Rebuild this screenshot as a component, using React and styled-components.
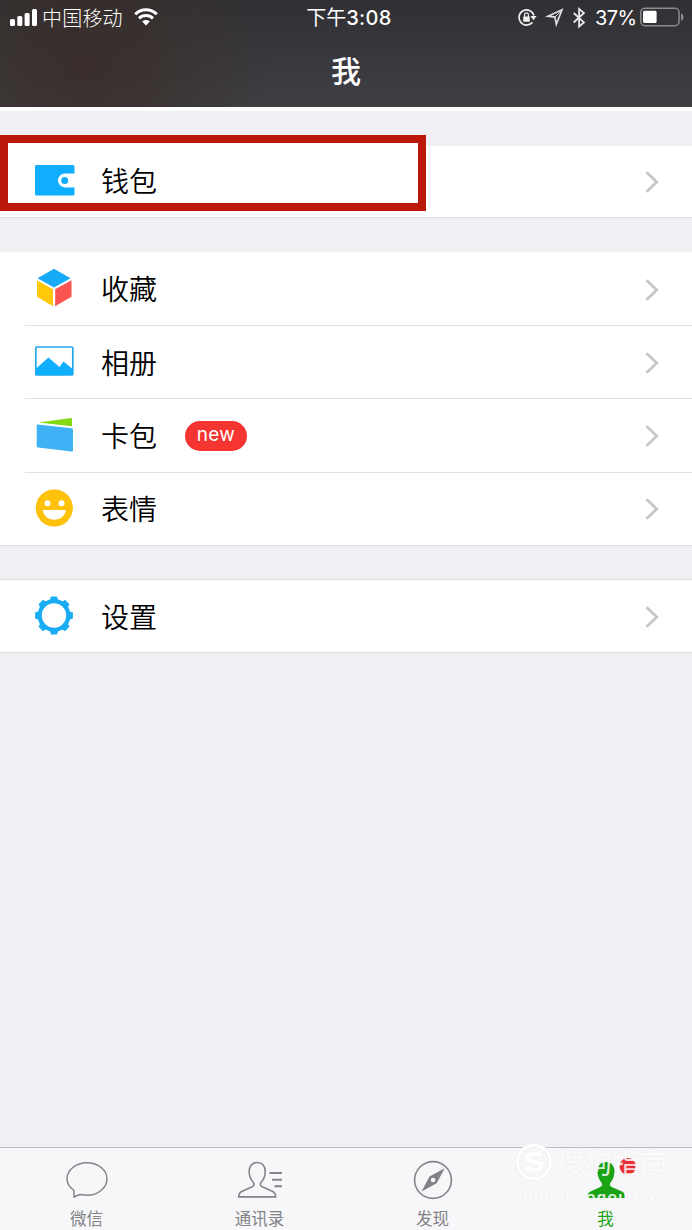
import styled, { createGlobalStyle } from 'styled-components';

const GlobalStyle = createGlobalStyle`
  * {
    box-sizing: border-box;
  }

  body {
    margin: 0;
    background-color: #efeff4;
    font-family: 'Liberation Sans', 'Noto Sans CJK SC', sans-serif;
  }

  svg {
    display: block;
    flex-shrink: 0;
    overflow: visible;
  }
`;

const Page = styled.div`
  display: flex;
  flex-direction: column;
  width: 692px;
  height: 1230px;
  overflow: hidden;
  background-color: #efeff4;
`;

const Header = styled.header`
  height: 111px;
  flex-shrink: 0;
  border-bottom: 4px solid #ffffff;
  color: #ffffff;
  background: radial-gradient(
      ellipse 190px 230px at 85px 66px,
      rgba(57, 42, 39, 0.75),
      rgba(58, 50, 45, 0.5) 60%,
      transparent
    ),
    linear-gradient(#302f34, #403f44);

  h1 {
    margin: 0;
    height: 68px;
    line-height: 68px;
    font-family: 'Noto Sans CJK SC', sans-serif;
    font-size: 30px;
    font-weight: 500;
    text-align: center;
  }
`;

const StatusBar = styled.div`
  display: grid;
  grid-template-columns: 250px 198px 244px;
  height: 35px;
  align-items: center;
`;

const StatusGroup = styled.div`
  display: flex;
  align-items: center;
  justify-content: ${({ $align }) => $align || 'flex-start'};
  height: 35px;
  padding: ${({ $padding }) => $padding || '0'};
  font-family: ${({ $latin }) =>
    $latin
      ? "Inter, 'Noto Sans CJK SC', sans-serif"
      : "'Noto Sans CJK SC', sans-serif"};
  font-size: 20px;
  font-weight: 300;
  line-height: 35px;
  white-space: nowrap;
`;

const Clock = styled.span`
  padding-top: 2px;
  font-weight: 400;

  b {
    font-weight: 500;
    letter-spacing: 0.4px;
  }
`;

const Carrier = styled.span`
  margin: 0 11.5px 0 5px;
  letter-spacing: 0.2px;
`;

const Percent = styled.span`
  width: 39px;
  margin: 0 6px 0 10px;
  padding-top: 1px;
  font-weight: 400;
  letter-spacing: -0.6px;
`;

const Content = styled.main`
  flex: 1;
  padding-top: 35px;
`;

const Group = styled.section`
  position: relative;
  margin-bottom: ${({ $gap }) => $gap}px;
  background-color: #ffffff;
  border-bottom: 1px solid #dedee2;
  border-top: ${({ $line }) => ($line ? '1px solid #dedee2' : 'none')};
`;

const Highlight = styled.div`
  position: absolute;
  left: 0;
  top: -11px;
  width: 426px;
  height: 76px;
  border: 8px solid #bb170b;
  background-color: #ffffff;
`;

const Row = styled.div`
  position: relative;
  display: flex;
  align-items: center;
  height: ${({ $height }) => $height}px;
  padding: ${({ $shift }) => $shift}px 32px 0 34px;
`;

const Divider = styled.div`
  height: 1px;
  margin: 0 0 -1px 25px;
  background-color: #e2e2e5;
`;

const IconBox = styled.div`
  display: flex;
  width: 40px;
  height: 40px;
  margin: 0 27px 3px 0;
`;

const Label = styled.span`
  height: 44px;
  margin-bottom: 2.4px;
  line-height: 44px;
  font-family: 'Noto Sans CJK SC', sans-serif;
  font-size: 28px;
  font-weight: 350;
  color: #000000;
`;

const NewBadge = styled.span`
  width: 62px;
  height: 30px;
  margin: 0 0 1px 28px;
  border-radius: 15px;
  background-color: #f43531;
  color: #ffffff;
  font-family: Inter, sans-serif;
  font-size: 19px;
  line-height: 27px;
  letter-spacing: 0.3px;
  text-align: center;
`;

const Arrow = styled.svg`
  margin-left: auto;
`;

const TabBar = styled.nav`
  position: relative;
  display: grid;
  grid-template-columns: repeat(4, 1fr);
  height: 83px;
  flex-shrink: 0;
  border-top: 1px solid #bdbdc1;
  background-color: #f7f7f9;
`;

const Tab = styled.div`
  display: flex;
  flex-direction: column;
  align-items: center;
  padding-top: 9px;
  color: ${({ $active }) => ($active ? '#1aa315' : '#828286')};
  font-family: 'Noto Sans CJK SC', sans-serif;
  font-size: 16.5px;
  line-height: 24px;

  svg {
    margin-bottom: 5px;
  }
`;

const Watermark = styled.div`
  position: absolute;
  left: 514px;
  top: -7px;
  width: 160px;
  color: rgba(255, 255, 255, 0.85);
  text-shadow: 0 0 2px rgba(0, 0, 0, 0.06);
`;

const WatermarkBrand = styled.div`
  display: flex;
  align-items: center;
  gap: 3px;
  height: 42px;
  font-family: 'Noto Sans CJK SC', sans-serif;
  font-size: 28px;
  font-weight: 400;
  line-height: 42px;
  white-space: nowrap;
`;

const WatermarkUrl = styled.div`
  height: 26px;
  font-size: 15.5px;
  font-weight: 700;
  line-height: 27px;
  letter-spacing: 1.25px;
  white-space: nowrap;
`;

const SignalIcon = () => (
  <svg width="27" height="18" viewBox="0 0 27 18" fill="#fff">
    <rect x="0" y="10" width="5" height="7" rx="1.5" />
    <rect x="7.3" y="7" width="5" height="10" rx="1.5" />
    <rect x="14.6" y="4" width="5" height="13" rx="1.5" />
    <rect x="22" y="0" width="5" height="17" rx="1.5" />
  </svg>
);

const WifiIcon = () => (
  <svg width="24" height="18" viewBox="0 0 24 18">
    <g fill="none" stroke="#fff" strokeWidth="3">
      <path d="M1.2 5.3C7.5-.9 16.5-.9 22.8 5.3" />
      <path d="M5 9.4c4-3.8 10-3.8 14 0" />
    </g>
    <path d="M8.2 12.4c2.2-2 5.4-2 7.6 0L12 16.5z" fill="#fff" />
  </svg>
);

const RotationLockIcon = () => (
  <svg width="19" height="18" viewBox="0 0 19 18">
    <path
      d="M14.4 13.4A7.6 7.6 0 1 1 15.9 6.4"
      fill="none"
      stroke="#eee"
      strokeWidth="1.7"
    />
    <path d="M12.4 7h6.2l-3.1 4.2z" fill="#eee" />
    <rect x="5.2" y="7.4" width="6.6" height="5.4" rx=".5" fill="#eee" />
    <path d="M6.6 8V5.8a1.9 1.9 0 0 1 3.8 0V8" fill="none" stroke="#eee" strokeWidth="1.2" />
  </svg>
);

const LocationIcon = () => (
  <svg width="16" height="17" viewBox="0 0 16 17">
    <path
      d="M15 .8L1 7.2l6.9.9 1.4 7.2z"
      fill="none"
      stroke="#dcdcde"
      strokeWidth="1.7"
    />
    <path d="M15 .8L7.9 8.1" stroke="#dcdcde" strokeWidth="1" />
  </svg>
);

const BluetoothIcon = () => (
  <svg width="12" height="20" viewBox="0 0 12 20">
    <path
      d="M.7 5l10.2 9.4-4.8 4.1V.9l4.8 4.1L.7 14.5"
      fill="none"
      stroke="#e8e8ea"
      strokeWidth="1.8"
    />
  </svg>
);

const BatteryIcon = () => (
  <svg width="44" height="19" viewBox="0 0 44 19">
    <rect x=".8" y=".3" width="38.2" height="17.4" rx="4" fill="none" stroke="#8d8c91" strokeWidth="1.5" />
    <rect x="3" y="2.7" width="13.6" height="12.4" rx="1.5" fill="#fff" />
    <path d="M41 5.5c3.4 1.2 3.4 6.2 0 7.3z" fill="#8d8c91" />
  </svg>
);

const WalletIcon = () => (
  <svg width="40" height="40" viewBox="0 0 40 40">
    <path
      d="M2.5 5H39a1.5 1.5 0 0 1 1.5 1.5V13.4H31a7 7 0 0 0 0 14h9.5V34a1.5 1.5 0 0 1-1.5 1.5H2.5A1.5 1.5 0 0 1 1 34V6.5A1.5 1.5 0 0 1 2.5 5z"
      fill="#10aeff"
    />
    <circle cx="30.7" cy="20.4" r="3.5" fill="#10aeff" />
  </svg>
);

const CubeIcon = () => (
  <svg width="40" height="40" viewBox="0 0 40 40">
    <path d="M20 .8l16.5 9.5L20 19.6 3.5 10.3z" fill="#16aaf7" />
    <path d="M3 12.2l16 9v17L3 28.7z" fill="#ffc90a" />
    <path d="M37.5 12.2l-16.3 9v17l16.3-9.5z" fill="#fa5451" />
  </svg>
);

const AlbumIcon = () => (
  <svg width="40" height="40" viewBox="0 0 40 40">
    <rect x="1.8" y="6" width="37" height="28" rx="1" fill="none" stroke="#22a8e8" strokeWidth="1.7" />
    <path d="M2 27.5l12.5-11 11 9.5 4-5.5 9 7.5v6H2z" fill="#10aeff" />
  </svg>
);

const CardsIcon = () => (
  <svg width="40" height="40" viewBox="0 0 40 40">
    <path d="M4.5 7.6L36.8 3Q38 3 38 4v7.3z" fill="#85d912" />
    <path
      d="M3.8 9.5l33.7 3.8Q39 13.5 39 15v20.3q0 1.5-1.5 1.3L4 32.6q-1.3-.2-1.3-1.6V10.5q0-1 1.1-1z"
      fill="#3eb2f4"
    />
  </svg>
);

const SmileIcon = () => (
  <svg width="40" height="40" viewBox="0 0 40 40">
    <circle cx="20.3" cy="20" r="18.6" fill="#ffc20b" />
    <circle cx="13.5" cy="15.2" r="3" fill="#fff" />
    <circle cx="27.5" cy="15.2" r="3" fill="#fff" />
    <path d="M8.7 22h23.2c-.8 6-5.4 9.7-11.6 9.7S9.500 28 8.700 22z" fill="#fff" />
  </svg>
);

const GearIcon = () => (
  <svg width="40" height="40" viewBox="0 0 40 40">
    <circle cx="20" cy="19.5" r="14.3" fill="none" stroke="#1aadf3" strokeWidth="4.2" />
    {[0, 45, 90, 135, 180, 225, 270, 315].map((angle) => (
      <path
        key={angle}
        d="M15 5l1.5-2.400v-1q0-1 1-1h5q1 0 1 1v1L25 5z"
        fill="#1aadf3"
        transform={`rotate(${angle} 20 19.5)`}
      />
    ))}
  </svg>
);

const ChevronIcon = () => (
  <Arrow width="15" height="22" viewBox="0 0 15 22">
    <path d="M1.5 1.2L11.8 11 1.5 20.8" fill="none" stroke="#c7c7cb" strokeWidth="2.8" />
  </Arrow>
);

const ChatIcon = () => (
  <svg width="46" height="44" viewBox="0 0 46 44" fill="none" stroke="#858589" strokeWidth="1.5">
    <path d="M10 33.5C5.5 30.3 3 26 3 21.7 3 13 12 5.8 23 5.8S43 13 43 21.7 34.5 38.3 23 38.3c-2.800 0-5.300-.8-7.500-.8L10 40z" />
  </svg>
);

const ContactsIcon = () => (
  <svg width="46" height="44" viewBox="0 0 46 44" fill="none" stroke="#858589" strokeWidth="1.6">
    <path d="M20.2 5.5c-5 0-8.200 3.600-8 9.500.1 4.500 1.600 7.600 4 10.200 1.400 1.600 1.200 3.600-1 4.600l-10 4.400C2.700 35.400 1.700 36.500 1.700 39.900h37c0-3.400-1-4.500-3.500-5.700l-10-4.400c-2.200-1-2.400-3-1-4.600 2.400-2.600 3.900-5.700 4-10.200.2-5.900-3-9.500-8-9.500z" />
    <path d="M32.5 16H45M35 22.700h10M37.500 29.300H45" strokeWidth="2" />
  </svg>
);

const CompassIcon = () => (
  <svg width="46" height="44" viewBox="0 0 46 44">
    <circle cx="23" cy="23" r="18.4" fill="none" stroke="#858589" strokeWidth="1.6" />
    <path
      d="M34.7 11.300l-8 14.900-15.200 8.300 8-14.900zM23.100 20.700a2.300 2.300 0 1 0 0 4.600 2.300 2.300 0 0 0 0-4.600z"
      fill="#828286"
      fillRule="evenodd"
    />
  </svg>
);

const MeIcon = () => (
  <svg width="46" height="44" viewBox="0 0 46 44">
    <path
      d="M23 5c-5.400 0-8.700 3.900-8.500 10 .1 4.500 1.800 8 4 10.800 1.200 1.600.8 3.100-1.200 4.100L8 34.200C5.500 35.400 4.500 37 4.500 41H42c0-4-1-5.600-3.500-6.800l-9.800-4.300c-2-1-2.400-2.500-1.200-4.100 2.200-2.800 3.900-6.300 4-10.800.2-6.100-3.100-10-8.500-10z"
      fill="#1aa315"
    />
    <circle cx="44.7" cy="9.3" r="8.3" fill="#ed3337" />
  </svg>
);

const SogouIcon = () => (
  <svg width="39" height="38" viewBox="0 0 39 38" fill="none">
    <circle cx="20" cy="19" r="16.500" stroke="#f1f1f4" strokeWidth="4.500" />
    <circle cx="20" cy="19" r="16.500" stroke="#fff" strokeWidth="2.800" />
    <path
      d="M27.500 12.500c-4-2.300-14-2.800-14 1.900 0 5.400 14 3.400 14 8.600 0 5-11 4.300-15.500 1.700"
      stroke="#fff"
      strokeWidth="3.600"
    />
  </svg>
);

const groups = [
  {
    line: false,
    gap: 34,
    height: 71,
    shift: 0,
    highlight: true,
    rows: [{ label: '钱包', Icon: WalletIcon }],
  },
  {
    line: false,
    gap: 33,
    height: 73,
    shift: 2,
    rows: [
      { label: '收藏', Icon: CubeIcon },
      { label: '相册', Icon: AlbumIcon },
      { label: '卡包', Icon: CardsIcon, badge: 'new' },
      { label: '表情', Icon: SmileIcon },
    ],
  },
  {
    line: true,
    gap: 0,
    height: 72,
    shift: 2,
    rows: [{ label: '设置', Icon: GearIcon }],
  },
];

const tabs = [
  { label: '微信', Icon: ChatIcon },
  { label: '通讯录', Icon: ContactsIcon },
  { label: '发现', Icon: CompassIcon },
  { label: '我', Icon: MeIcon, active: true },
];

function MenuRow({ item, height, shift }) {
  const { Icon, label, badge } = item;

  return (
    <Row $height={height} $shift={shift}>
      <IconBox>
        <Icon />
      </IconBox>
      <Label>{label}</Label>
      {badge && <NewBadge>{badge}</NewBadge>}
      <ChevronIcon />
    </Row>
  );
}

function App() {
  return (
    <Page>
      <GlobalStyle />
      <Header>
        <StatusBar>
          <StatusGroup $padding="0 0 0 10px">
            <SignalIcon />
            <Carrier>中国移动</Carrier>
            <WifiIcon />
          </StatusGroup>
          <StatusGroup $align="center" $latin>
            <Clock>
              下午<b>3:08</b>
            </Clock>
          </StatusGroup>
          <StatusGroup $align="flex-end" $latin $padding="0 8px 0 0">
            <RotationLockIcon />
            <StatusGroup $padding="0 10px 0 10px">
              <LocationIcon />
            </StatusGroup>
            <BluetoothIcon />
            <Percent>37%</Percent>
            <BatteryIcon />
          </StatusGroup>
        </StatusBar>
        <h1>我</h1>
      </Header>

      <Content>
        {groups.map((group, index) => (
          <Group key={index} $line={group.line} $gap={group.gap}>
            {group.highlight && <Highlight />}
            {group.rows.map((item, i) => (
              <div key={item.label}>
                {i > 0 && <Divider />}
                <MenuRow
                  item={item}
                  height={i > 0 ? 73.4 : group.height}
                  shift={group.shift}
                />
              </div>
            ))}
          </Group>
        ))}
      </Content>

      <TabBar>
        {tabs.map(({ label, Icon, active }) => (
          <Tab key={label} $active={active}>
            <Icon />
            {label}
          </Tab>
        ))}
        <Watermark>
          <WatermarkBrand>
            <SogouIcon />
            搜狗指南
          </WatermarkBrand>
          <WatermarkUrl>zhinan.sogou.com</WatermarkUrl>
        </Watermark>
      </TabBar>
    </Page>
  );
}

export default App;
